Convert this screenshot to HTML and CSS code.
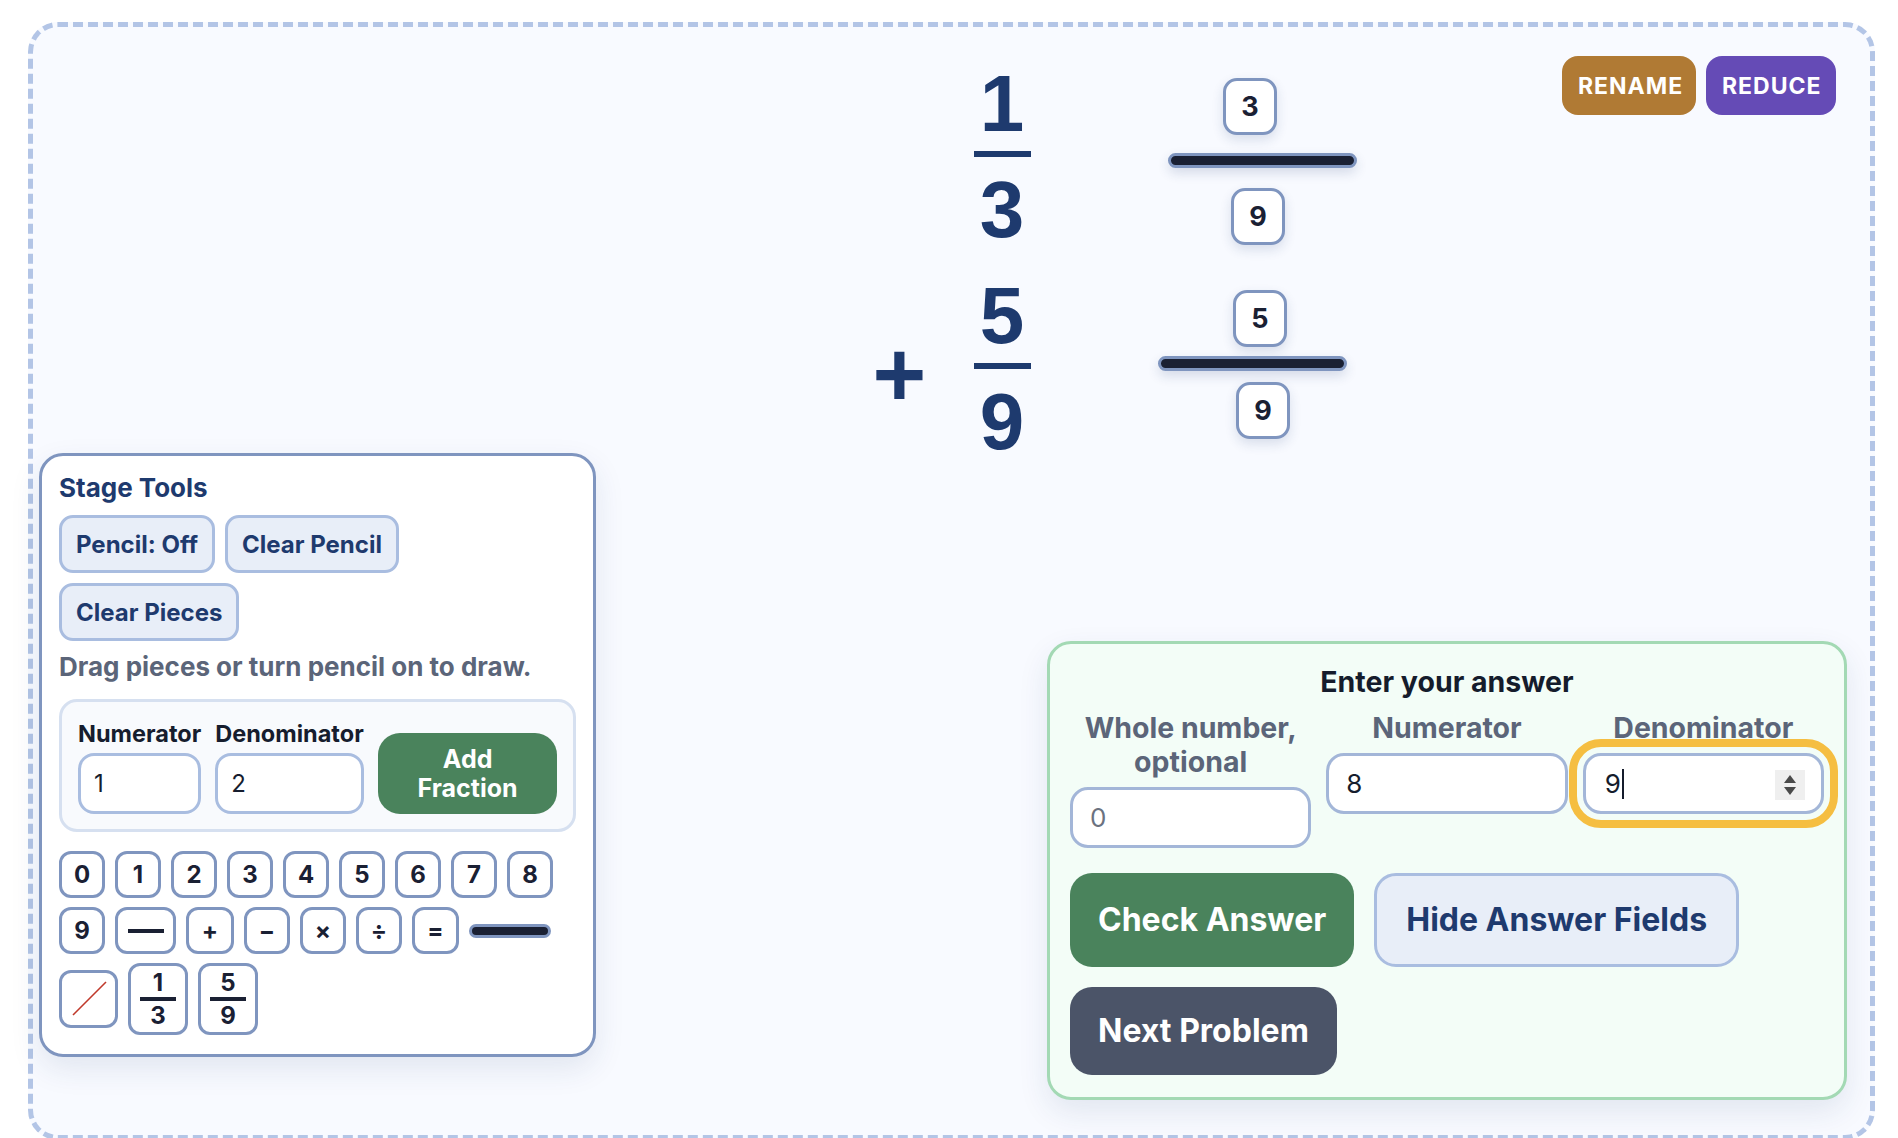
FILE: index.html
```html
<!DOCTYPE html>
<html lang="en">
<head>
<meta charset="utf-8">
<title>Fraction Stage</title>
<link rel="stylesheet" href="styles.css">
</head>
<body>
<main class="stage">
  <div class="stage-actions">
    <button class="pill pill--rename">RENAME</button>
    <button class="pill pill--reduce">REDUCE</button>
  </div>

  <section class="problem">
    <div class="term">
      <span class="op"></span>
      <div class="frac">
        <span class="num">1</span>
        <span class="frac-line"></span>
        <span class="num">3</span>
      </div>
    </div>
    <div class="term term--second">
      <span class="op">+</span>
      <div class="frac">
        <span class="num">5</span>
        <span class="frac-line"></span>
        <span class="num">9</span>
      </div>
    </div>
  </section>

  <div class="piece tile" style="left:1190px;top:51px">3</div>
  <div class="piece bar" style="left:1135px;top:126px"></div>
  <div class="piece tile" style="left:1198px;top:161px">9</div>
  <div class="piece tile" style="left:1200px;top:263px">5</div>
  <div class="piece bar" style="left:1125px;top:329px"></div>
  <div class="piece tile" style="left:1203px;top:355px">9</div>

  <div class="workspace">
    <section class="tools">
      <h2 class="tools-title">Stage Tools</h2>
      <div class="btn-row">
        <button class="soft-btn">Pencil: Off</button>
        <button class="soft-btn">Clear Pencil</button>
        <button class="soft-btn">Clear Pieces</button>
      </div>
      <p class="hint">Drag pieces or turn pencil on to draw.</p>
      <div class="maker">
        <label class="field">
          <span class="field-label">Numerator</span>
          <input class="field-input" type="text" value="1">
        </label>
        <label class="field">
          <span class="field-label">Denominator</span>
          <input class="field-input" type="text" value="2">
        </label>
        <button class="add-btn">Add<br>Fraction</button>
      </div>
      <div class="keypad">
        <span class="key">0</span>
        <span class="key">1</span>
        <span class="key">2</span>
        <span class="key">3</span>
        <span class="key">4</span>
        <span class="key">5</span>
        <span class="key">6</span>
        <span class="key">7</span>
        <span class="key">8</span>
        <span class="key">9</span>
        <span class="key key--dash"><span class="dash-glyph"></span></span>
        <span class="key key--plus">+</span>
        <span class="key">−</span>
        <span class="key">×</span>
        <span class="key">÷</span>
        <span class="key key--eq">=</span>
        <span class="key-bar"></span>
        <span class="key key--slash">
          <svg width="36" height="36" viewBox="0 0 36 36"><line x1="2" y1="34" x2="35" y2="1" stroke="#c0392b" stroke-width="1.6"/></svg>
        </span>
        <span class="key key--frac"><span>1</span><i></i><span>3</span></span>
        <span class="key key--frac"><span>5</span><i></i><span>9</span></span>
      </div>
    </section>

    <section class="answer">
      <h2 class="answer-title">Enter your answer</h2>
      <div class="answer-grid">
        <label class="a-field">
          <span class="a-label a-label--wrap">Whole number, optional</span>
          <input class="a-input" type="text" placeholder="0">
        </label>
        <label class="a-field">
          <span class="a-label">Numerator</span>
          <input class="a-input" type="text" value="8">
        </label>
        <div class="a-field">
          <span class="a-label">Denominator</span>
          <div class="a-input a-input--focus">9<span class="caret"></span>
            <span class="spin"><svg width="14" height="24" viewBox="0 0 14 24"><path d="M7 2 L13 10 L1 10 Z" fill="#4a4a4a"/><path d="M1 14 L13 14 L7 22 Z" fill="#4a4a4a"/></svg></span>
          </div>
        </div>
      </div>
      <div class="answer-actions">
        <button class="big-btn big-btn--check">Check Answer</button>
        <button class="big-btn big-btn--hide">Hide Answer Fields</button>
        <button class="big-btn big-btn--next">Next Problem</button>
      </div>
    </section>
  </div>
</main>
</body>
</html>
```
FILE: styles.css
```css
* { box-sizing: border-box; }

html, body {
  margin: 0;
  padding: 0;
  background: #ffffff;
  font-family: "Inter", "Noto Sans", "Liberation Sans", sans-serif;
  overflow: hidden;
}

button { font-family: inherit; cursor: pointer; }

.stage {
  position: relative;
  margin: 22px 23px 0 28px;
  height: 1118px;
  border: 5px dashed #b3c5e6;
  border-radius: 30px;
  background: #f8faff;
  padding-top: 37px;
}

/* top-right actions */
.stage-actions {
  position: absolute;
  top: 29px;
  right: 34px;
  display: flex;
  gap: 10px;
}
.pill {
  height: 59px;
  border: 0;
  border-radius: 16px;
  color: #ffffff;
  font-weight: 700;
  font-size: 23px;
  letter-spacing: 1px;
  padding: 0 16px;
}
.pill--rename { background: #b07a34; width: 134px; }
.pill--reduce { background: #654bb6; width: 130px; }

/* problem */
.problem {
  display: flex;
  flex-direction: column;
  align-items: center;
  gap: 26px;
}
.term {
  display: flex;
  align-items: center;
}
.op {
  width: 101px;
  font-family: "Liberation Sans", Arial, sans-serif;
  font-weight: 700;
  font-size: 92px;
  line-height: 1;
  color: #1e3a6e;
  margin-top: 10px;
}
.frac {
  width: 57px;
  display: flex;
  flex-direction: column;
  align-items: center;
}
.num {
  font-family: "Liberation Sans", Arial, sans-serif;
  font-weight: 700;
  font-size: 80px;
  line-height: 80px;
  color: #1e3a6e;
}
.frac-line {
  display: block;
  width: 57px;
  height: 6px;
  background: #1e3a6e;
  margin: 7px 0 13px;
}

/* draggable pieces on the stage canvas */
.piece { position: absolute; }
.tile {
  width: 54px;
  height: 57px;
  border: 3px solid #7f95bf;
  border-radius: 14px;
  background: #ffffff;
  display: flex;
  align-items: center;
  justify-content: center;
  font-weight: 700;
  font-size: 27px;
  color: #1a2033;
  box-shadow: 0 5px 12px rgba(30, 58, 110, 0.14);
}
.bar {
  width: 189px;
  height: 15px;
  border: 3px solid #7f95bf;
  border-radius: 9px;
  background: #1a2033;
  box-shadow: 0 5px 12px rgba(30, 58, 110, 0.16);
}

/* workspace row */
.workspace {
  display: flex;
  justify-content: space-between;
  align-items: flex-start;
  padding: 0 23px 0 6px;
  margin-top: -9px;
}

/* stage tools panel */
.tools {
  width: 557px;
  background: #ffffff;
  border: 3px solid #7f95bf;
  border-radius: 24px;
  padding: 16px 17px 19px;
  box-shadow: 0 12px 30px rgba(30, 58, 110, 0.10);
}
.tools-title {
  margin: 0 0 12px;
  font-size: 26px;
  line-height: 31px;
  font-weight: 700;
  color: #1e3a6e;
}
.btn-row {
  display: flex;
  flex-wrap: wrap;
  gap: 10px;
}
.soft-btn {
  height: 58px;
  padding: 0 14px;
  border: 3px solid #a9bde0;
  border-radius: 14px;
  background: #e8eef8;
  color: #1e3a6e;
  font-weight: 700;
  font-size: 24px;
}
.hint {
  margin: 11px 0 0;
  font-size: 26px;
  line-height: 30px;
  font-weight: 700;
  color: #5b6579;
}
.maker {
  margin-top: 17px;
  display: flex;
  align-items: flex-end;
  gap: 14px;
  padding: 18px 16px 15px;
  border: 3px solid #d6e0f0;
  border-radius: 18px;
  background: #f8fafd;
}
.field {
  display: flex;
  flex-direction: column;
  gap: 6px;
}
.field-label {
  font-size: 23.5px;
  line-height: 27px;
  font-weight: 700;
  color: #161d2e;
  white-space: nowrap;
}
.field-input {
  width: 100%;
  height: 61px;
  border: 3px solid #a9bde0;
  border-radius: 16px;
  background: #ffffff;
  padding: 0 13px;
  font-family: inherit;
  font-size: 24px;
  color: #161d2e;
}
.field:first-child .field-input { width: 123px; }
.field:nth-child(2) .field-input { width: 149px; }
.add-btn {
  width: 179px;
  height: 81px;
  border: 0;
  border-radius: 22px;
  background: #4a835c;
  color: #ffffff;
  font-weight: 700;
  font-size: 25px;
  line-height: 29px;
}

/* keypad */
.keypad {
  margin-top: 19px;
  display: flex;
  flex-wrap: wrap;
  align-items: center;
  gap: 9px 10px;
}
.key {
  width: 46px;
  height: 47px;
  border: 3px solid #7f95bf;
  border-radius: 12px;
  background: #ffffff;
  display: flex;
  align-items: center;
  justify-content: center;
  font-weight: 700;
  font-size: 24px;
  color: #1a2033;
}
.key--dash { width: 61px; }
.dash-glyph { display: block; width: 36px; height: 4px; background: #1a2033; }
.key--plus { width: 48px; }
.key--eq { width: 47px; }
.key-bar {
  width: 82px;
  height: 14px;
  border: 3px solid #7f95bf;
  border-radius: 8px;
  background: #1a2033;
}
.key--slash { width: 59px; height: 58px; }
.key--frac {
  width: 60px;
  height: 72px;
  flex-direction: column;
  font-size: 24px;
  line-height: 24px;
}
.key--frac i {
  display: block;
  width: 36px;
  height: 4px;
  background: #1a2033;
  margin: 2px 0 3px;
}

/* answer panel */
.answer {
  width: 800px;
  margin-top: 188px;
  background: #f3fdf7;
  border: 3px solid #a3d9b4;
  border-radius: 24px;
  padding: 21px 20px 22px;
  box-shadow: 0 12px 30px rgba(30, 58, 110, 0.10);
}
.answer-title {
  margin: 0;
  text-align: center;
  font-size: 28.5px;
  line-height: 34px;
  font-weight: 700;
  color: #151c2c;
}
.answer-grid {
  margin-top: 12px;
  display: grid;
  grid-template-columns: repeat(3, 1fr);
  gap: 15px;
  align-items: start;
}
.a-field {
  display: flex;
  flex-direction: column;
  align-items: stretch;
  gap: 8px;
}
.a-label {
  text-align: center;
  font-size: 28.5px;
  line-height: 34px;
  font-weight: 700;
  color: #5b6579;
  white-space: nowrap;
}
.a-label--wrap { white-space: normal; }
.a-input {
  width: 100%;
  height: 61px;
  border: 3px solid #a3b6d8;
  border-radius: 18px;
  background: #ffffff;
  padding: 0 17px;
  font-family: inherit;
  font-size: 26px;
  color: #151c2c;
}
.a-input::placeholder { color: #6b7280; }
.a-input--focus {
  position: relative;
  display: flex;
  align-items: center;
  padding-left: 19px;
  outline: 8px solid #f5be41;
  outline-offset: 6px;
}
.caret {
  display: inline-block;
  width: 2px;
  height: 30px;
  background: #151c2c;
  margin-left: 1px;
}
.spin {
  position: absolute;
  right: 16px;
  top: 14px;
  width: 30px;
  height: 30px;
  background: #efefef;
  display: flex;
  align-items: center;
  justify-content: center;
}
.answer-actions {
  margin-top: 25px;
  display: flex;
  flex-wrap: wrap;
  gap: 20px 20px;
}
.big-btn {
  border: 0;
  border-radius: 22px;
  padding: 24px 28px;
  font-weight: 700;
  font-size: 32px;
  line-height: 40px;
}
.big-btn--check { background: #4a835c; color: #ffffff; }
.big-btn--hide {
  background: #e8eef8;
  color: #1e3a6e;
  border: 3px solid #a9bde0;
  padding: 24px 29px;
}
.big-btn--next { background: #4b5468; color: #ffffff; }
```
